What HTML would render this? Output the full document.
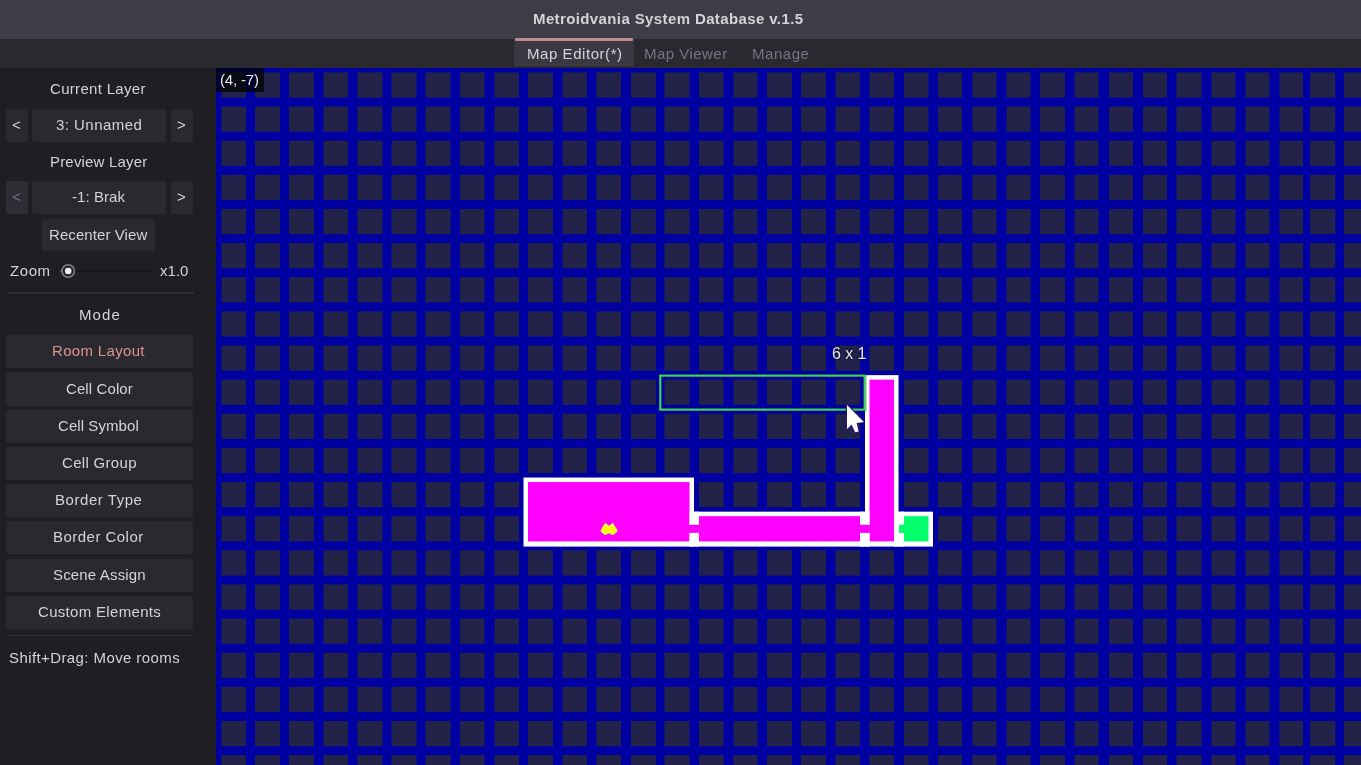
<!DOCTYPE html><html><head><meta charset="utf-8"><style>
html,body{margin:0;padding:0;width:1361px;height:765px;overflow:hidden;background:#1f1e23;font-family:"Liberation Sans", sans-serif;}
.a{position:absolute;}
.t{position:absolute;white-space:nowrap;will-change:transform;}
</style></head><body>
<div class="a" style="left:0.00px;top:0.00px;width:1361.00px;height:38.80px;background:#3e3c47;"></div>
<div class="t" style="left:533.20px;top:10.50px;line-height:15px;font-size:15px;letter-spacing:0.385px;color:#d4d4d8;font-weight:bold;">Metroidvania System Database v.1.5</div>
<div class="a" style="left:0.00px;top:38.80px;width:1361.00px;height:29.20px;background:#2a292f;"></div>
<div class="a" style="left:0.00px;top:38.80px;width:1361.00px;height:2.20px;background:#292733;"></div>
<div class="a" style="left:513.80px;top:38.30px;width:120.00px;height:27.70px;background:#3a3943;"></div>
<div class="a" style="left:514.80px;top:38.30px;width:118.50px;height:2.30px;background:#c28a8a;border-radius:1px;"></div>
<div class="t" style="left:526.95px;top:45.75px;line-height:15px;font-size:15px;letter-spacing:0.558px;color:#d4d4d8;font-weight:normal;">Map Editor(*)</div>
<div class="t" style="left:644.20px;top:45.60px;line-height:15px;font-size:15px;letter-spacing:0.467px;color:#77757f;font-weight:normal;">Map Viewer</div>
<div class="t" style="left:751.60px;top:45.60px;line-height:15px;font-size:15px;letter-spacing:0.54px;color:#77757f;font-weight:normal;">Manage</div>
<div class="t" style="left:49.70px;top:80.90px;line-height:15px;font-size:15px;letter-spacing:0.308px;color:#d4d4d8;font-weight:normal;">Current Layer</div>
<div class="a" style="left:5.50px;top:108.70px;width:22.00px;height:33.30px;background:#2a292f;border-radius:2px;"></div>
<div class="a" style="left:31.70px;top:108.70px;width:134.30px;height:33.30px;background:#2a292f;border-radius:2px;"></div>
<div class="a" style="left:171.00px;top:108.70px;width:22.00px;height:33.30px;background:#2a292f;border-radius:2px;"></div>
<div class="t" style="left:12.00px;top:117.10px;line-height:15px;font-size:15px;letter-spacing:0px;color:#d4d4d8;font-weight:normal;">&lt;</div>
<div class="t" style="left:55.70px;top:117.10px;line-height:15px;font-size:15px;letter-spacing:0.456px;color:#d4d4d8;font-weight:normal;">3: Unnamed</div>
<div class="t" style="left:177.00px;top:117.10px;line-height:15px;font-size:15px;letter-spacing:0px;color:#d4d4d8;font-weight:normal;">&gt;</div>
<div class="t" style="left:49.95px;top:153.50px;line-height:15px;font-size:15px;letter-spacing:0.183px;color:#d4d4d8;font-weight:normal;">Preview Layer</div>
<div class="a" style="left:5.50px;top:181.30px;width:22.00px;height:32.70px;background:#2e2d35;border-radius:2px;"></div>
<div class="a" style="left:31.70px;top:181.30px;width:134.30px;height:32.70px;background:#2a292f;border-radius:2px;"></div>
<div class="a" style="left:171.00px;top:181.30px;width:22.00px;height:32.70px;background:#2a292f;border-radius:2px;"></div>
<div class="t" style="left:12.00px;top:189.35px;line-height:15px;font-size:15px;letter-spacing:0px;color:#77757f;font-weight:normal;">&lt;</div>
<div class="t" style="left:71.90px;top:189.35px;line-height:15px;font-size:15px;letter-spacing:0.071px;color:#d4d4d8;font-weight:normal;">-1: Brak</div>
<div class="t" style="left:177.00px;top:189.35px;line-height:15px;font-size:15px;letter-spacing:0px;color:#d4d4d8;font-weight:normal;">&gt;</div>
<div class="a" style="left:42.40px;top:218.50px;width:113.10px;height:32.60px;background:#2a292f;border-radius:2px;"></div>
<div class="t" style="left:48.60px;top:226.80px;line-height:15px;font-size:15px;letter-spacing:0.083px;color:#d4d4d8;font-weight:normal;">Recenter View</div>
<div class="t" style="left:9.85px;top:263.30px;line-height:15px;font-size:15px;letter-spacing:0.567px;color:#d4d4d8;font-weight:normal;">Zoom</div>
<div class="t" style="left:159.70px;top:263.30px;line-height:15px;font-size:15px;letter-spacing:0.033px;color:#d4d4d8;font-weight:normal;">x1.0</div>
<div class="a" style="left:68px;top:270px;width:82px;height:2px;background:#17161a"></div>
<svg class="a" style="left:58px;top:261px" width="20" height="20"><path d="M2.2,10 L5.5,7.2 L5.5,12.8 Z" fill="#8a8a90"/><circle cx="10.2" cy="10" r="6.2" fill="#1f1e23" stroke="#808086" stroke-width="1.5"/><circle cx="10.2" cy="10" r="3.3" fill="#eeeeee"/></svg>
<div class="a" style="left:7px;top:292px;width:186.5px;height:1.6px;background:#2e2d33"></div>
<div class="t" style="left:78.90px;top:306.60px;line-height:15px;font-size:15px;letter-spacing:1.067px;color:#d4d4d8;font-weight:normal;">Mode</div>
<div class="a" style="left:5.50px;top:335.20px;width:187.10px;height:33.20px;background:#2a292f;border-radius:2px;"></div>
<div class="t" style="left:52.00px;top:343.35px;line-height:15px;font-size:15px;letter-spacing:0.33px;color:#dc9295;font-weight:normal;">Room Layout</div>
<div class="a" style="left:5.50px;top:372.42px;width:187.10px;height:33.20px;background:#2a292f;border-radius:2px;"></div>
<div class="t" style="left:65.90px;top:380.57px;line-height:15px;font-size:15px;letter-spacing:0.1px;color:#d4d4d8;font-weight:normal;">Cell Color</div>
<div class="a" style="left:5.50px;top:409.64px;width:187.10px;height:33.20px;background:#2a292f;border-radius:2px;"></div>
<div class="t" style="left:57.60px;top:417.79px;line-height:15px;font-size:15px;letter-spacing:0.07px;color:#d4d4d8;font-weight:normal;">Cell Symbol</div>
<div class="a" style="left:5.50px;top:446.86px;width:187.10px;height:33.20px;background:#2a292f;border-radius:2px;"></div>
<div class="t" style="left:62.00px;top:455.01px;line-height:15px;font-size:15px;letter-spacing:0.311px;color:#d4d4d8;font-weight:normal;">Cell Group</div>
<div class="a" style="left:5.50px;top:484.08px;width:187.10px;height:33.20px;background:#2a292f;border-radius:2px;"></div>
<div class="t" style="left:54.50px;top:492.23px;line-height:15px;font-size:15px;letter-spacing:0.55px;color:#d4d4d8;font-weight:normal;">Border Type</div>
<div class="a" style="left:5.50px;top:521.30px;width:187.10px;height:33.20px;background:#2a292f;border-radius:2px;"></div>
<div class="t" style="left:52.50px;top:529.45px;line-height:15px;font-size:15px;letter-spacing:0.473px;color:#d4d4d8;font-weight:normal;">Border Color</div>
<div class="a" style="left:5.50px;top:558.52px;width:187.10px;height:33.20px;background:#2a292f;border-radius:2px;"></div>
<div class="t" style="left:52.50px;top:566.67px;line-height:15px;font-size:15px;letter-spacing:0.164px;color:#d4d4d8;font-weight:normal;">Scene Assign</div>
<div class="a" style="left:5.50px;top:595.74px;width:187.10px;height:33.20px;background:#2a292f;border-radius:2px;"></div>
<div class="t" style="left:37.70px;top:603.89px;line-height:15px;font-size:15px;letter-spacing:0.314px;color:#d4d4d8;font-weight:normal;">Custom Elements</div>
<div class="a" style="left:7.00px;top:634.50px;width:186.50px;height:1.60px;background:#2e2d33;"></div>
<div class="t" style="left:8.85px;top:649.50px;line-height:15px;font-size:15px;letter-spacing:0.405px;color:#d4d4d8;font-weight:normal;">Shift+Drag: Move rooms</div>
<svg class="a" style="left:216px;top:68px" width="1145" height="697"><rect width="1145" height="697" fill="#0000a2"/><g fill="#23234a"><rect x="5.50" y="4.40" width="24.50" height="25.20"/><rect x="5.50" y="38.54" width="24.50" height="25.20"/><rect x="5.50" y="72.67" width="24.50" height="25.20"/><rect x="5.50" y="106.81" width="24.50" height="25.20"/><rect x="5.50" y="140.95" width="24.50" height="25.20"/><rect x="5.50" y="175.09" width="24.50" height="25.20"/><rect x="5.50" y="209.22" width="24.50" height="25.20"/><rect x="5.50" y="243.36" width="24.50" height="25.20"/><rect x="5.50" y="277.50" width="24.50" height="25.20"/><rect x="5.50" y="311.63" width="24.50" height="25.20"/><rect x="5.50" y="345.77" width="24.50" height="25.20"/><rect x="5.50" y="379.91" width="24.50" height="25.20"/><rect x="5.50" y="414.04" width="24.50" height="25.20"/><rect x="5.50" y="448.18" width="24.50" height="25.20"/><rect x="5.50" y="482.32" width="24.50" height="25.20"/><rect x="5.50" y="516.46" width="24.50" height="25.20"/><rect x="5.50" y="550.59" width="24.50" height="25.20"/><rect x="5.50" y="584.73" width="24.50" height="25.20"/><rect x="5.50" y="618.87" width="24.50" height="25.20"/><rect x="5.50" y="653.00" width="24.50" height="25.20"/><rect x="5.50" y="687.14" width="24.50" height="25.20"/><rect x="39.00" y="4.40" width="25.00" height="25.20"/><rect x="39.00" y="38.54" width="25.00" height="25.20"/><rect x="39.00" y="72.67" width="25.00" height="25.20"/><rect x="39.00" y="106.81" width="25.00" height="25.20"/><rect x="39.00" y="140.95" width="25.00" height="25.20"/><rect x="39.00" y="175.09" width="25.00" height="25.20"/><rect x="39.00" y="209.22" width="25.00" height="25.20"/><rect x="39.00" y="243.36" width="25.00" height="25.20"/><rect x="39.00" y="277.50" width="25.00" height="25.20"/><rect x="39.00" y="311.63" width="25.00" height="25.20"/><rect x="39.00" y="345.77" width="25.00" height="25.20"/><rect x="39.00" y="379.91" width="25.00" height="25.20"/><rect x="39.00" y="414.04" width="25.00" height="25.20"/><rect x="39.00" y="448.18" width="25.00" height="25.20"/><rect x="39.00" y="482.32" width="25.00" height="25.20"/><rect x="39.00" y="516.46" width="25.00" height="25.20"/><rect x="39.00" y="550.59" width="25.00" height="25.20"/><rect x="39.00" y="584.73" width="25.00" height="25.20"/><rect x="39.00" y="618.87" width="25.00" height="25.20"/><rect x="39.00" y="653.00" width="25.00" height="25.20"/><rect x="39.00" y="687.14" width="25.00" height="25.20"/><rect x="73.00" y="4.40" width="25.00" height="25.20"/><rect x="73.00" y="38.54" width="25.00" height="25.20"/><rect x="73.00" y="72.67" width="25.00" height="25.20"/><rect x="73.00" y="106.81" width="25.00" height="25.20"/><rect x="73.00" y="140.95" width="25.00" height="25.20"/><rect x="73.00" y="175.09" width="25.00" height="25.20"/><rect x="73.00" y="209.22" width="25.00" height="25.20"/><rect x="73.00" y="243.36" width="25.00" height="25.20"/><rect x="73.00" y="277.50" width="25.00" height="25.20"/><rect x="73.00" y="311.63" width="25.00" height="25.20"/><rect x="73.00" y="345.77" width="25.00" height="25.20"/><rect x="73.00" y="379.91" width="25.00" height="25.20"/><rect x="73.00" y="414.04" width="25.00" height="25.20"/><rect x="73.00" y="448.18" width="25.00" height="25.20"/><rect x="73.00" y="482.32" width="25.00" height="25.20"/><rect x="73.00" y="516.46" width="25.00" height="25.20"/><rect x="73.00" y="550.59" width="25.00" height="25.20"/><rect x="73.00" y="584.73" width="25.00" height="25.20"/><rect x="73.00" y="618.87" width="25.00" height="25.20"/><rect x="73.00" y="653.00" width="25.00" height="25.20"/><rect x="73.00" y="687.14" width="25.00" height="25.20"/><rect x="107.50" y="4.40" width="24.50" height="25.20"/><rect x="107.50" y="38.54" width="24.50" height="25.20"/><rect x="107.50" y="72.67" width="24.50" height="25.20"/><rect x="107.50" y="106.81" width="24.50" height="25.20"/><rect x="107.50" y="140.95" width="24.50" height="25.20"/><rect x="107.50" y="175.09" width="24.50" height="25.20"/><rect x="107.50" y="209.22" width="24.50" height="25.20"/><rect x="107.50" y="243.36" width="24.50" height="25.20"/><rect x="107.50" y="277.50" width="24.50" height="25.20"/><rect x="107.50" y="311.63" width="24.50" height="25.20"/><rect x="107.50" y="345.77" width="24.50" height="25.20"/><rect x="107.50" y="379.91" width="24.50" height="25.20"/><rect x="107.50" y="414.04" width="24.50" height="25.20"/><rect x="107.50" y="448.18" width="24.50" height="25.20"/><rect x="107.50" y="482.32" width="24.50" height="25.20"/><rect x="107.50" y="516.46" width="24.50" height="25.20"/><rect x="107.50" y="550.59" width="24.50" height="25.20"/><rect x="107.50" y="584.73" width="24.50" height="25.20"/><rect x="107.50" y="618.87" width="24.50" height="25.20"/><rect x="107.50" y="653.00" width="24.50" height="25.20"/><rect x="107.50" y="687.14" width="24.50" height="25.20"/><rect x="141.50" y="4.40" width="25.00" height="25.20"/><rect x="141.50" y="38.54" width="25.00" height="25.20"/><rect x="141.50" y="72.67" width="25.00" height="25.20"/><rect x="141.50" y="106.81" width="25.00" height="25.20"/><rect x="141.50" y="140.95" width="25.00" height="25.20"/><rect x="141.50" y="175.09" width="25.00" height="25.20"/><rect x="141.50" y="209.22" width="25.00" height="25.20"/><rect x="141.50" y="243.36" width="25.00" height="25.20"/><rect x="141.50" y="277.50" width="25.00" height="25.20"/><rect x="141.50" y="311.63" width="25.00" height="25.20"/><rect x="141.50" y="345.77" width="25.00" height="25.20"/><rect x="141.50" y="379.91" width="25.00" height="25.20"/><rect x="141.50" y="414.04" width="25.00" height="25.20"/><rect x="141.50" y="448.18" width="25.00" height="25.20"/><rect x="141.50" y="482.32" width="25.00" height="25.20"/><rect x="141.50" y="516.46" width="25.00" height="25.20"/><rect x="141.50" y="550.59" width="25.00" height="25.20"/><rect x="141.50" y="584.73" width="25.00" height="25.20"/><rect x="141.50" y="618.87" width="25.00" height="25.20"/><rect x="141.50" y="653.00" width="25.00" height="25.20"/><rect x="141.50" y="687.14" width="25.00" height="25.20"/><rect x="175.50" y="4.40" width="25.00" height="25.20"/><rect x="175.50" y="38.54" width="25.00" height="25.20"/><rect x="175.50" y="72.67" width="25.00" height="25.20"/><rect x="175.50" y="106.81" width="25.00" height="25.20"/><rect x="175.50" y="140.95" width="25.00" height="25.20"/><rect x="175.50" y="175.09" width="25.00" height="25.20"/><rect x="175.50" y="209.22" width="25.00" height="25.20"/><rect x="175.50" y="243.36" width="25.00" height="25.20"/><rect x="175.50" y="277.50" width="25.00" height="25.20"/><rect x="175.50" y="311.63" width="25.00" height="25.20"/><rect x="175.50" y="345.77" width="25.00" height="25.20"/><rect x="175.50" y="379.91" width="25.00" height="25.20"/><rect x="175.50" y="414.04" width="25.00" height="25.20"/><rect x="175.50" y="448.18" width="25.00" height="25.20"/><rect x="175.50" y="482.32" width="25.00" height="25.20"/><rect x="175.50" y="516.46" width="25.00" height="25.20"/><rect x="175.50" y="550.59" width="25.00" height="25.20"/><rect x="175.50" y="584.73" width="25.00" height="25.20"/><rect x="175.50" y="618.87" width="25.00" height="25.20"/><rect x="175.50" y="653.00" width="25.00" height="25.20"/><rect x="175.50" y="687.14" width="25.00" height="25.20"/><rect x="209.50" y="4.40" width="25.00" height="25.20"/><rect x="209.50" y="38.54" width="25.00" height="25.20"/><rect x="209.50" y="72.67" width="25.00" height="25.20"/><rect x="209.50" y="106.81" width="25.00" height="25.20"/><rect x="209.50" y="140.95" width="25.00" height="25.20"/><rect x="209.50" y="175.09" width="25.00" height="25.20"/><rect x="209.50" y="209.22" width="25.00" height="25.20"/><rect x="209.50" y="243.36" width="25.00" height="25.20"/><rect x="209.50" y="277.50" width="25.00" height="25.20"/><rect x="209.50" y="311.63" width="25.00" height="25.20"/><rect x="209.50" y="345.77" width="25.00" height="25.20"/><rect x="209.50" y="379.91" width="25.00" height="25.20"/><rect x="209.50" y="414.04" width="25.00" height="25.20"/><rect x="209.50" y="448.18" width="25.00" height="25.20"/><rect x="209.50" y="482.32" width="25.00" height="25.20"/><rect x="209.50" y="516.46" width="25.00" height="25.20"/><rect x="209.50" y="550.59" width="25.00" height="25.20"/><rect x="209.50" y="584.73" width="25.00" height="25.20"/><rect x="209.50" y="618.87" width="25.00" height="25.20"/><rect x="209.50" y="653.00" width="25.00" height="25.20"/><rect x="209.50" y="687.14" width="25.00" height="25.20"/><rect x="244.00" y="4.40" width="24.50" height="25.20"/><rect x="244.00" y="38.54" width="24.50" height="25.20"/><rect x="244.00" y="72.67" width="24.50" height="25.20"/><rect x="244.00" y="106.81" width="24.50" height="25.20"/><rect x="244.00" y="140.95" width="24.50" height="25.20"/><rect x="244.00" y="175.09" width="24.50" height="25.20"/><rect x="244.00" y="209.22" width="24.50" height="25.20"/><rect x="244.00" y="243.36" width="24.50" height="25.20"/><rect x="244.00" y="277.50" width="24.50" height="25.20"/><rect x="244.00" y="311.63" width="24.50" height="25.20"/><rect x="244.00" y="345.77" width="24.50" height="25.20"/><rect x="244.00" y="379.91" width="24.50" height="25.20"/><rect x="244.00" y="414.04" width="24.50" height="25.20"/><rect x="244.00" y="448.18" width="24.50" height="25.20"/><rect x="244.00" y="482.32" width="24.50" height="25.20"/><rect x="244.00" y="516.46" width="24.50" height="25.20"/><rect x="244.00" y="550.59" width="24.50" height="25.20"/><rect x="244.00" y="584.73" width="24.50" height="25.20"/><rect x="244.00" y="618.87" width="24.50" height="25.20"/><rect x="244.00" y="653.00" width="24.50" height="25.20"/><rect x="244.00" y="687.14" width="24.50" height="25.20"/><rect x="278.50" y="4.40" width="24.50" height="25.20"/><rect x="278.50" y="38.54" width="24.50" height="25.20"/><rect x="278.50" y="72.67" width="24.50" height="25.20"/><rect x="278.50" y="106.81" width="24.50" height="25.20"/><rect x="278.50" y="140.95" width="24.50" height="25.20"/><rect x="278.50" y="175.09" width="24.50" height="25.20"/><rect x="278.50" y="209.22" width="24.50" height="25.20"/><rect x="278.50" y="243.36" width="24.50" height="25.20"/><rect x="278.50" y="277.50" width="24.50" height="25.20"/><rect x="278.50" y="311.63" width="24.50" height="25.20"/><rect x="278.50" y="345.77" width="24.50" height="25.20"/><rect x="278.50" y="379.91" width="24.50" height="25.20"/><rect x="278.50" y="414.04" width="24.50" height="25.20"/><rect x="278.50" y="448.18" width="24.50" height="25.20"/><rect x="278.50" y="482.32" width="24.50" height="25.20"/><rect x="278.50" y="516.46" width="24.50" height="25.20"/><rect x="278.50" y="550.59" width="24.50" height="25.20"/><rect x="278.50" y="584.73" width="24.50" height="25.20"/><rect x="278.50" y="618.87" width="24.50" height="25.20"/><rect x="278.50" y="653.00" width="24.50" height="25.20"/><rect x="278.50" y="687.14" width="24.50" height="25.20"/><rect x="312.00" y="4.40" width="25.00" height="25.20"/><rect x="312.00" y="38.54" width="25.00" height="25.20"/><rect x="312.00" y="72.67" width="25.00" height="25.20"/><rect x="312.00" y="106.81" width="25.00" height="25.20"/><rect x="312.00" y="140.95" width="25.00" height="25.20"/><rect x="312.00" y="175.09" width="25.00" height="25.20"/><rect x="312.00" y="209.22" width="25.00" height="25.20"/><rect x="312.00" y="243.36" width="25.00" height="25.20"/><rect x="312.00" y="277.50" width="25.00" height="25.20"/><rect x="312.00" y="311.63" width="25.00" height="25.20"/><rect x="312.00" y="345.77" width="25.00" height="25.20"/><rect x="312.00" y="379.91" width="25.00" height="25.20"/><rect x="312.00" y="414.04" width="25.00" height="25.20"/><rect x="312.00" y="448.18" width="25.00" height="25.20"/><rect x="312.00" y="482.32" width="25.00" height="25.20"/><rect x="312.00" y="516.46" width="25.00" height="25.20"/><rect x="312.00" y="550.59" width="25.00" height="25.20"/><rect x="312.00" y="584.73" width="25.00" height="25.20"/><rect x="312.00" y="618.87" width="25.00" height="25.20"/><rect x="312.00" y="653.00" width="25.00" height="25.20"/><rect x="312.00" y="687.14" width="25.00" height="25.20"/><rect x="346.50" y="4.40" width="24.50" height="25.20"/><rect x="346.50" y="38.54" width="24.50" height="25.20"/><rect x="346.50" y="72.67" width="24.50" height="25.20"/><rect x="346.50" y="106.81" width="24.50" height="25.20"/><rect x="346.50" y="140.95" width="24.50" height="25.20"/><rect x="346.50" y="175.09" width="24.50" height="25.20"/><rect x="346.50" y="209.22" width="24.50" height="25.20"/><rect x="346.50" y="243.36" width="24.50" height="25.20"/><rect x="346.50" y="277.50" width="24.50" height="25.20"/><rect x="346.50" y="311.63" width="24.50" height="25.20"/><rect x="346.50" y="345.77" width="24.50" height="25.20"/><rect x="346.50" y="379.91" width="24.50" height="25.20"/><rect x="346.50" y="414.04" width="24.50" height="25.20"/><rect x="346.50" y="448.18" width="24.50" height="25.20"/><rect x="346.50" y="482.32" width="24.50" height="25.20"/><rect x="346.50" y="516.46" width="24.50" height="25.20"/><rect x="346.50" y="550.59" width="24.50" height="25.20"/><rect x="346.50" y="584.73" width="24.50" height="25.20"/><rect x="346.50" y="618.87" width="24.50" height="25.20"/><rect x="346.50" y="653.00" width="24.50" height="25.20"/><rect x="346.50" y="687.14" width="24.50" height="25.20"/><rect x="380.50" y="4.40" width="24.50" height="25.20"/><rect x="380.50" y="38.54" width="24.50" height="25.20"/><rect x="380.50" y="72.67" width="24.50" height="25.20"/><rect x="380.50" y="106.81" width="24.50" height="25.20"/><rect x="380.50" y="140.95" width="24.50" height="25.20"/><rect x="380.50" y="175.09" width="24.50" height="25.20"/><rect x="380.50" y="209.22" width="24.50" height="25.20"/><rect x="380.50" y="243.36" width="24.50" height="25.20"/><rect x="380.50" y="277.50" width="24.50" height="25.20"/><rect x="380.50" y="311.63" width="24.50" height="25.20"/><rect x="380.50" y="345.77" width="24.50" height="25.20"/><rect x="380.50" y="379.91" width="24.50" height="25.20"/><rect x="380.50" y="414.04" width="24.50" height="25.20"/><rect x="380.50" y="448.18" width="24.50" height="25.20"/><rect x="380.50" y="482.32" width="24.50" height="25.20"/><rect x="380.50" y="516.46" width="24.50" height="25.20"/><rect x="380.50" y="550.59" width="24.50" height="25.20"/><rect x="380.50" y="584.73" width="24.50" height="25.20"/><rect x="380.50" y="618.87" width="24.50" height="25.20"/><rect x="380.50" y="653.00" width="24.50" height="25.20"/><rect x="380.50" y="687.14" width="24.50" height="25.20"/><rect x="415.00" y="4.40" width="24.80" height="25.20"/><rect x="415.00" y="38.54" width="24.80" height="25.20"/><rect x="415.00" y="72.67" width="24.80" height="25.20"/><rect x="415.00" y="106.81" width="24.80" height="25.20"/><rect x="415.00" y="140.95" width="24.80" height="25.20"/><rect x="415.00" y="175.09" width="24.80" height="25.20"/><rect x="415.00" y="209.22" width="24.80" height="25.20"/><rect x="415.00" y="243.36" width="24.80" height="25.20"/><rect x="415.00" y="277.50" width="24.80" height="25.20"/><rect x="415.00" y="311.63" width="24.80" height="25.20"/><rect x="415.00" y="345.77" width="24.80" height="25.20"/><rect x="415.00" y="379.91" width="24.80" height="25.20"/><rect x="415.00" y="414.04" width="24.80" height="25.20"/><rect x="415.00" y="448.18" width="24.80" height="25.20"/><rect x="415.00" y="482.32" width="24.80" height="25.20"/><rect x="415.00" y="516.46" width="24.80" height="25.20"/><rect x="415.00" y="550.59" width="24.80" height="25.20"/><rect x="415.00" y="584.73" width="24.80" height="25.20"/><rect x="415.00" y="618.87" width="24.80" height="25.20"/><rect x="415.00" y="653.00" width="24.80" height="25.20"/><rect x="415.00" y="687.14" width="24.80" height="25.20"/><rect x="448.50" y="4.40" width="25.00" height="25.20"/><rect x="448.50" y="38.54" width="25.00" height="25.20"/><rect x="448.50" y="72.67" width="25.00" height="25.20"/><rect x="448.50" y="106.81" width="25.00" height="25.20"/><rect x="448.50" y="140.95" width="25.00" height="25.20"/><rect x="448.50" y="175.09" width="25.00" height="25.20"/><rect x="448.50" y="209.22" width="25.00" height="25.20"/><rect x="448.50" y="243.36" width="25.00" height="25.20"/><rect x="448.50" y="277.50" width="25.00" height="25.20"/><rect x="448.50" y="311.63" width="25.00" height="25.20"/><rect x="448.50" y="345.77" width="25.00" height="25.20"/><rect x="448.50" y="379.91" width="25.00" height="25.20"/><rect x="448.50" y="414.04" width="25.00" height="25.20"/><rect x="448.50" y="448.18" width="25.00" height="25.20"/><rect x="448.50" y="482.32" width="25.00" height="25.20"/><rect x="448.50" y="516.46" width="25.00" height="25.20"/><rect x="448.50" y="550.59" width="25.00" height="25.20"/><rect x="448.50" y="584.73" width="25.00" height="25.20"/><rect x="448.50" y="618.87" width="25.00" height="25.20"/><rect x="448.50" y="653.00" width="25.00" height="25.20"/><rect x="448.50" y="687.14" width="25.00" height="25.20"/><rect x="483.00" y="4.40" width="24.50" height="25.20"/><rect x="483.00" y="38.54" width="24.50" height="25.20"/><rect x="483.00" y="72.67" width="24.50" height="25.20"/><rect x="483.00" y="106.81" width="24.50" height="25.20"/><rect x="483.00" y="140.95" width="24.50" height="25.20"/><rect x="483.00" y="175.09" width="24.50" height="25.20"/><rect x="483.00" y="209.22" width="24.50" height="25.20"/><rect x="483.00" y="243.36" width="24.50" height="25.20"/><rect x="483.00" y="277.50" width="24.50" height="25.20"/><rect x="483.00" y="311.63" width="24.50" height="25.20"/><rect x="483.00" y="345.77" width="24.50" height="25.20"/><rect x="483.00" y="379.91" width="24.50" height="25.20"/><rect x="483.00" y="414.04" width="24.50" height="25.20"/><rect x="483.00" y="448.18" width="24.50" height="25.20"/><rect x="483.00" y="482.32" width="24.50" height="25.20"/><rect x="483.00" y="516.46" width="24.50" height="25.20"/><rect x="483.00" y="550.59" width="24.50" height="25.20"/><rect x="483.00" y="584.73" width="24.50" height="25.20"/><rect x="483.00" y="618.87" width="24.50" height="25.20"/><rect x="483.00" y="653.00" width="24.50" height="25.20"/><rect x="483.00" y="687.14" width="24.50" height="25.20"/><rect x="517.50" y="4.40" width="24.00" height="25.20"/><rect x="517.50" y="38.54" width="24.00" height="25.20"/><rect x="517.50" y="72.67" width="24.00" height="25.20"/><rect x="517.50" y="106.81" width="24.00" height="25.20"/><rect x="517.50" y="140.95" width="24.00" height="25.20"/><rect x="517.50" y="175.09" width="24.00" height="25.20"/><rect x="517.50" y="209.22" width="24.00" height="25.20"/><rect x="517.50" y="243.36" width="24.00" height="25.20"/><rect x="517.50" y="277.50" width="24.00" height="25.20"/><rect x="517.50" y="311.63" width="24.00" height="25.20"/><rect x="517.50" y="345.77" width="24.00" height="25.20"/><rect x="517.50" y="379.91" width="24.00" height="25.20"/><rect x="517.50" y="414.04" width="24.00" height="25.20"/><rect x="517.50" y="448.18" width="24.00" height="25.20"/><rect x="517.50" y="482.32" width="24.00" height="25.20"/><rect x="517.50" y="516.46" width="24.00" height="25.20"/><rect x="517.50" y="550.59" width="24.00" height="25.20"/><rect x="517.50" y="584.73" width="24.00" height="25.20"/><rect x="517.50" y="618.87" width="24.00" height="25.20"/><rect x="517.50" y="653.00" width="24.00" height="25.20"/><rect x="517.50" y="687.14" width="24.00" height="25.20"/><rect x="551.00" y="4.40" width="25.00" height="25.20"/><rect x="551.00" y="38.54" width="25.00" height="25.20"/><rect x="551.00" y="72.67" width="25.00" height="25.20"/><rect x="551.00" y="106.81" width="25.00" height="25.20"/><rect x="551.00" y="140.95" width="25.00" height="25.20"/><rect x="551.00" y="175.09" width="25.00" height="25.20"/><rect x="551.00" y="209.22" width="25.00" height="25.20"/><rect x="551.00" y="243.36" width="25.00" height="25.20"/><rect x="551.00" y="277.50" width="25.00" height="25.20"/><rect x="551.00" y="311.63" width="25.00" height="25.20"/><rect x="551.00" y="345.77" width="25.00" height="25.20"/><rect x="551.00" y="379.91" width="25.00" height="25.20"/><rect x="551.00" y="414.04" width="25.00" height="25.20"/><rect x="551.00" y="448.18" width="25.00" height="25.20"/><rect x="551.00" y="482.32" width="25.00" height="25.20"/><rect x="551.00" y="516.46" width="25.00" height="25.20"/><rect x="551.00" y="550.59" width="25.00" height="25.20"/><rect x="551.00" y="584.73" width="25.00" height="25.20"/><rect x="551.00" y="618.87" width="25.00" height="25.20"/><rect x="551.00" y="653.00" width="25.00" height="25.20"/><rect x="551.00" y="687.14" width="25.00" height="25.20"/><rect x="585.00" y="4.40" width="25.00" height="25.20"/><rect x="585.00" y="38.54" width="25.00" height="25.20"/><rect x="585.00" y="72.67" width="25.00" height="25.20"/><rect x="585.00" y="106.81" width="25.00" height="25.20"/><rect x="585.00" y="140.95" width="25.00" height="25.20"/><rect x="585.00" y="175.09" width="25.00" height="25.20"/><rect x="585.00" y="209.22" width="25.00" height="25.20"/><rect x="585.00" y="243.36" width="25.00" height="25.20"/><rect x="585.00" y="277.50" width="25.00" height="25.20"/><rect x="585.00" y="311.63" width="25.00" height="25.20"/><rect x="585.00" y="345.77" width="25.00" height="25.20"/><rect x="585.00" y="379.91" width="25.00" height="25.20"/><rect x="585.00" y="414.04" width="25.00" height="25.20"/><rect x="585.00" y="448.18" width="25.00" height="25.20"/><rect x="585.00" y="482.32" width="25.00" height="25.20"/><rect x="585.00" y="516.46" width="25.00" height="25.20"/><rect x="585.00" y="550.59" width="25.00" height="25.20"/><rect x="585.00" y="584.73" width="25.00" height="25.20"/><rect x="585.00" y="618.87" width="25.00" height="25.20"/><rect x="585.00" y="653.00" width="25.00" height="25.20"/><rect x="585.00" y="687.14" width="25.00" height="25.20"/><rect x="619.50" y="4.40" width="24.50" height="25.20"/><rect x="619.50" y="38.54" width="24.50" height="25.20"/><rect x="619.50" y="72.67" width="24.50" height="25.20"/><rect x="619.50" y="106.81" width="24.50" height="25.20"/><rect x="619.50" y="140.95" width="24.50" height="25.20"/><rect x="619.50" y="175.09" width="24.50" height="25.20"/><rect x="619.50" y="209.22" width="24.50" height="25.20"/><rect x="619.50" y="243.36" width="24.50" height="25.20"/><rect x="619.50" y="277.50" width="24.50" height="25.20"/><rect x="619.50" y="311.63" width="24.50" height="25.20"/><rect x="619.50" y="345.77" width="24.50" height="25.20"/><rect x="619.50" y="379.91" width="24.50" height="25.20"/><rect x="619.50" y="414.04" width="24.50" height="25.20"/><rect x="619.50" y="448.18" width="24.50" height="25.20"/><rect x="619.50" y="482.32" width="24.50" height="25.20"/><rect x="619.50" y="516.46" width="24.50" height="25.20"/><rect x="619.50" y="550.59" width="24.50" height="25.20"/><rect x="619.50" y="584.73" width="24.50" height="25.20"/><rect x="619.50" y="618.87" width="24.50" height="25.20"/><rect x="619.50" y="653.00" width="24.50" height="25.20"/><rect x="619.50" y="687.14" width="24.50" height="25.20"/><rect x="653.50" y="4.40" width="24.50" height="25.20"/><rect x="653.50" y="38.54" width="24.50" height="25.20"/><rect x="653.50" y="72.67" width="24.50" height="25.20"/><rect x="653.50" y="106.81" width="24.50" height="25.20"/><rect x="653.50" y="140.95" width="24.50" height="25.20"/><rect x="653.50" y="175.09" width="24.50" height="25.20"/><rect x="653.50" y="209.22" width="24.50" height="25.20"/><rect x="653.50" y="243.36" width="24.50" height="25.20"/><rect x="653.50" y="277.50" width="24.50" height="25.20"/><rect x="653.50" y="311.63" width="24.50" height="25.20"/><rect x="653.50" y="345.77" width="24.50" height="25.20"/><rect x="653.50" y="379.91" width="24.50" height="25.20"/><rect x="653.50" y="414.04" width="24.50" height="25.20"/><rect x="653.50" y="448.18" width="24.50" height="25.20"/><rect x="653.50" y="482.32" width="24.50" height="25.20"/><rect x="653.50" y="516.46" width="24.50" height="25.20"/><rect x="653.50" y="550.59" width="24.50" height="25.20"/><rect x="653.50" y="584.73" width="24.50" height="25.20"/><rect x="653.50" y="618.87" width="24.50" height="25.20"/><rect x="653.50" y="653.00" width="24.50" height="25.20"/><rect x="653.50" y="687.14" width="24.50" height="25.20"/><rect x="688.00" y="4.40" width="24.50" height="25.20"/><rect x="688.00" y="38.54" width="24.50" height="25.20"/><rect x="688.00" y="72.67" width="24.50" height="25.20"/><rect x="688.00" y="106.81" width="24.50" height="25.20"/><rect x="688.00" y="140.95" width="24.50" height="25.20"/><rect x="688.00" y="175.09" width="24.50" height="25.20"/><rect x="688.00" y="209.22" width="24.50" height="25.20"/><rect x="688.00" y="243.36" width="24.50" height="25.20"/><rect x="688.00" y="277.50" width="24.50" height="25.20"/><rect x="688.00" y="311.63" width="24.50" height="25.20"/><rect x="688.00" y="345.77" width="24.50" height="25.20"/><rect x="688.00" y="379.91" width="24.50" height="25.20"/><rect x="688.00" y="414.04" width="24.50" height="25.20"/><rect x="688.00" y="448.18" width="24.50" height="25.20"/><rect x="688.00" y="482.32" width="24.50" height="25.20"/><rect x="688.00" y="516.46" width="24.50" height="25.20"/><rect x="688.00" y="550.59" width="24.50" height="25.20"/><rect x="688.00" y="584.73" width="24.50" height="25.20"/><rect x="688.00" y="618.87" width="24.50" height="25.20"/><rect x="688.00" y="653.00" width="24.50" height="25.20"/><rect x="688.00" y="687.14" width="24.50" height="25.20"/><rect x="722.00" y="4.40" width="24.00" height="25.20"/><rect x="722.00" y="38.54" width="24.00" height="25.20"/><rect x="722.00" y="72.67" width="24.00" height="25.20"/><rect x="722.00" y="106.81" width="24.00" height="25.20"/><rect x="722.00" y="140.95" width="24.00" height="25.20"/><rect x="722.00" y="175.09" width="24.00" height="25.20"/><rect x="722.00" y="209.22" width="24.00" height="25.20"/><rect x="722.00" y="243.36" width="24.00" height="25.20"/><rect x="722.00" y="277.50" width="24.00" height="25.20"/><rect x="722.00" y="311.63" width="24.00" height="25.20"/><rect x="722.00" y="345.77" width="24.00" height="25.20"/><rect x="722.00" y="379.91" width="24.00" height="25.20"/><rect x="722.00" y="414.04" width="24.00" height="25.20"/><rect x="722.00" y="448.18" width="24.00" height="25.20"/><rect x="722.00" y="482.32" width="24.00" height="25.20"/><rect x="722.00" y="516.46" width="24.00" height="25.20"/><rect x="722.00" y="550.59" width="24.00" height="25.20"/><rect x="722.00" y="584.73" width="24.00" height="25.20"/><rect x="722.00" y="618.87" width="24.00" height="25.20"/><rect x="722.00" y="653.00" width="24.00" height="25.20"/><rect x="722.00" y="687.14" width="24.00" height="25.20"/><rect x="756.50" y="4.40" width="24.00" height="25.20"/><rect x="756.50" y="38.54" width="24.00" height="25.20"/><rect x="756.50" y="72.67" width="24.00" height="25.20"/><rect x="756.50" y="106.81" width="24.00" height="25.20"/><rect x="756.50" y="140.95" width="24.00" height="25.20"/><rect x="756.50" y="175.09" width="24.00" height="25.20"/><rect x="756.50" y="209.22" width="24.00" height="25.20"/><rect x="756.50" y="243.36" width="24.00" height="25.20"/><rect x="756.50" y="277.50" width="24.00" height="25.20"/><rect x="756.50" y="311.63" width="24.00" height="25.20"/><rect x="756.50" y="345.77" width="24.00" height="25.20"/><rect x="756.50" y="379.91" width="24.00" height="25.20"/><rect x="756.50" y="414.04" width="24.00" height="25.20"/><rect x="756.50" y="448.18" width="24.00" height="25.20"/><rect x="756.50" y="482.32" width="24.00" height="25.20"/><rect x="756.50" y="516.46" width="24.00" height="25.20"/><rect x="756.50" y="550.59" width="24.00" height="25.20"/><rect x="756.50" y="584.73" width="24.00" height="25.20"/><rect x="756.50" y="618.87" width="24.00" height="25.20"/><rect x="756.50" y="653.00" width="24.00" height="25.20"/><rect x="756.50" y="687.14" width="24.00" height="25.20"/><rect x="790.50" y="4.40" width="24.00" height="25.20"/><rect x="790.50" y="38.54" width="24.00" height="25.20"/><rect x="790.50" y="72.67" width="24.00" height="25.20"/><rect x="790.50" y="106.81" width="24.00" height="25.20"/><rect x="790.50" y="140.95" width="24.00" height="25.20"/><rect x="790.50" y="175.09" width="24.00" height="25.20"/><rect x="790.50" y="209.22" width="24.00" height="25.20"/><rect x="790.50" y="243.36" width="24.00" height="25.20"/><rect x="790.50" y="277.50" width="24.00" height="25.20"/><rect x="790.50" y="311.63" width="24.00" height="25.20"/><rect x="790.50" y="345.77" width="24.00" height="25.20"/><rect x="790.50" y="379.91" width="24.00" height="25.20"/><rect x="790.50" y="414.04" width="24.00" height="25.20"/><rect x="790.50" y="448.18" width="24.00" height="25.20"/><rect x="790.50" y="482.32" width="24.00" height="25.20"/><rect x="790.50" y="516.46" width="24.00" height="25.20"/><rect x="790.50" y="550.59" width="24.00" height="25.20"/><rect x="790.50" y="584.73" width="24.00" height="25.20"/><rect x="790.50" y="618.87" width="24.00" height="25.20"/><rect x="790.50" y="653.00" width="24.00" height="25.20"/><rect x="790.50" y="687.14" width="24.00" height="25.20"/><rect x="824.00" y="4.40" width="25.00" height="25.20"/><rect x="824.00" y="38.54" width="25.00" height="25.20"/><rect x="824.00" y="72.67" width="25.00" height="25.20"/><rect x="824.00" y="106.81" width="25.00" height="25.20"/><rect x="824.00" y="140.95" width="25.00" height="25.20"/><rect x="824.00" y="175.09" width="25.00" height="25.20"/><rect x="824.00" y="209.22" width="25.00" height="25.20"/><rect x="824.00" y="243.36" width="25.00" height="25.20"/><rect x="824.00" y="277.50" width="25.00" height="25.20"/><rect x="824.00" y="311.63" width="25.00" height="25.20"/><rect x="824.00" y="345.77" width="25.00" height="25.20"/><rect x="824.00" y="379.91" width="25.00" height="25.20"/><rect x="824.00" y="414.04" width="25.00" height="25.20"/><rect x="824.00" y="448.18" width="25.00" height="25.20"/><rect x="824.00" y="482.32" width="25.00" height="25.20"/><rect x="824.00" y="516.46" width="25.00" height="25.20"/><rect x="824.00" y="550.59" width="25.00" height="25.20"/><rect x="824.00" y="584.73" width="25.00" height="25.20"/><rect x="824.00" y="618.87" width="25.00" height="25.20"/><rect x="824.00" y="653.00" width="25.00" height="25.20"/><rect x="824.00" y="687.14" width="25.00" height="25.20"/><rect x="858.50" y="4.40" width="24.00" height="25.20"/><rect x="858.50" y="38.54" width="24.00" height="25.20"/><rect x="858.50" y="72.67" width="24.00" height="25.20"/><rect x="858.50" y="106.81" width="24.00" height="25.20"/><rect x="858.50" y="140.95" width="24.00" height="25.20"/><rect x="858.50" y="175.09" width="24.00" height="25.20"/><rect x="858.50" y="209.22" width="24.00" height="25.20"/><rect x="858.50" y="243.36" width="24.00" height="25.20"/><rect x="858.50" y="277.50" width="24.00" height="25.20"/><rect x="858.50" y="311.63" width="24.00" height="25.20"/><rect x="858.50" y="345.77" width="24.00" height="25.20"/><rect x="858.50" y="379.91" width="24.00" height="25.20"/><rect x="858.50" y="414.04" width="24.00" height="25.20"/><rect x="858.50" y="448.18" width="24.00" height="25.20"/><rect x="858.50" y="482.32" width="24.00" height="25.20"/><rect x="858.50" y="516.46" width="24.00" height="25.20"/><rect x="858.50" y="550.59" width="24.00" height="25.20"/><rect x="858.50" y="584.73" width="24.00" height="25.20"/><rect x="858.50" y="618.87" width="24.00" height="25.20"/><rect x="858.50" y="653.00" width="24.00" height="25.20"/><rect x="858.50" y="687.14" width="24.00" height="25.20"/><rect x="893.00" y="4.40" width="24.00" height="25.20"/><rect x="893.00" y="38.54" width="24.00" height="25.20"/><rect x="893.00" y="72.67" width="24.00" height="25.20"/><rect x="893.00" y="106.81" width="24.00" height="25.20"/><rect x="893.00" y="140.95" width="24.00" height="25.20"/><rect x="893.00" y="175.09" width="24.00" height="25.20"/><rect x="893.00" y="209.22" width="24.00" height="25.20"/><rect x="893.00" y="243.36" width="24.00" height="25.20"/><rect x="893.00" y="277.50" width="24.00" height="25.20"/><rect x="893.00" y="311.63" width="24.00" height="25.20"/><rect x="893.00" y="345.77" width="24.00" height="25.20"/><rect x="893.00" y="379.91" width="24.00" height="25.20"/><rect x="893.00" y="414.04" width="24.00" height="25.20"/><rect x="893.00" y="448.18" width="24.00" height="25.20"/><rect x="893.00" y="482.32" width="24.00" height="25.20"/><rect x="893.00" y="516.46" width="24.00" height="25.20"/><rect x="893.00" y="550.59" width="24.00" height="25.20"/><rect x="893.00" y="584.73" width="24.00" height="25.20"/><rect x="893.00" y="618.87" width="24.00" height="25.20"/><rect x="893.00" y="653.00" width="24.00" height="25.20"/><rect x="893.00" y="687.14" width="24.00" height="25.20"/><rect x="927.00" y="4.40" width="24.00" height="25.20"/><rect x="927.00" y="38.54" width="24.00" height="25.20"/><rect x="927.00" y="72.67" width="24.00" height="25.20"/><rect x="927.00" y="106.81" width="24.00" height="25.20"/><rect x="927.00" y="140.95" width="24.00" height="25.20"/><rect x="927.00" y="175.09" width="24.00" height="25.20"/><rect x="927.00" y="209.22" width="24.00" height="25.20"/><rect x="927.00" y="243.36" width="24.00" height="25.20"/><rect x="927.00" y="277.50" width="24.00" height="25.20"/><rect x="927.00" y="311.63" width="24.00" height="25.20"/><rect x="927.00" y="345.77" width="24.00" height="25.20"/><rect x="927.00" y="379.91" width="24.00" height="25.20"/><rect x="927.00" y="414.04" width="24.00" height="25.20"/><rect x="927.00" y="448.18" width="24.00" height="25.20"/><rect x="927.00" y="482.32" width="24.00" height="25.20"/><rect x="927.00" y="516.46" width="24.00" height="25.20"/><rect x="927.00" y="550.59" width="24.00" height="25.20"/><rect x="927.00" y="584.73" width="24.00" height="25.20"/><rect x="927.00" y="618.87" width="24.00" height="25.20"/><rect x="927.00" y="653.00" width="24.00" height="25.20"/><rect x="927.00" y="687.14" width="24.00" height="25.20"/><rect x="960.50" y="4.40" width="25.00" height="25.20"/><rect x="960.50" y="38.54" width="25.00" height="25.20"/><rect x="960.50" y="72.67" width="25.00" height="25.20"/><rect x="960.50" y="106.81" width="25.00" height="25.20"/><rect x="960.50" y="140.95" width="25.00" height="25.20"/><rect x="960.50" y="175.09" width="25.00" height="25.20"/><rect x="960.50" y="209.22" width="25.00" height="25.20"/><rect x="960.50" y="243.36" width="25.00" height="25.20"/><rect x="960.50" y="277.50" width="25.00" height="25.20"/><rect x="960.50" y="311.63" width="25.00" height="25.20"/><rect x="960.50" y="345.77" width="25.00" height="25.20"/><rect x="960.50" y="379.91" width="25.00" height="25.20"/><rect x="960.50" y="414.04" width="25.00" height="25.20"/><rect x="960.50" y="448.18" width="25.00" height="25.20"/><rect x="960.50" y="482.32" width="25.00" height="25.20"/><rect x="960.50" y="516.46" width="25.00" height="25.20"/><rect x="960.50" y="550.59" width="25.00" height="25.20"/><rect x="960.50" y="584.73" width="25.00" height="25.20"/><rect x="960.50" y="618.87" width="25.00" height="25.20"/><rect x="960.50" y="653.00" width="25.00" height="25.20"/><rect x="960.50" y="687.14" width="25.00" height="25.20"/><rect x="995.50" y="4.40" width="24.00" height="25.20"/><rect x="995.50" y="38.54" width="24.00" height="25.20"/><rect x="995.50" y="72.67" width="24.00" height="25.20"/><rect x="995.50" y="106.81" width="24.00" height="25.20"/><rect x="995.50" y="140.95" width="24.00" height="25.20"/><rect x="995.50" y="175.09" width="24.00" height="25.20"/><rect x="995.50" y="209.22" width="24.00" height="25.20"/><rect x="995.50" y="243.36" width="24.00" height="25.20"/><rect x="995.50" y="277.50" width="24.00" height="25.20"/><rect x="995.50" y="311.63" width="24.00" height="25.20"/><rect x="995.50" y="345.77" width="24.00" height="25.20"/><rect x="995.50" y="379.91" width="24.00" height="25.20"/><rect x="995.50" y="414.04" width="24.00" height="25.20"/><rect x="995.50" y="448.18" width="24.00" height="25.20"/><rect x="995.50" y="482.32" width="24.00" height="25.20"/><rect x="995.50" y="516.46" width="24.00" height="25.20"/><rect x="995.50" y="550.59" width="24.00" height="25.20"/><rect x="995.50" y="584.73" width="24.00" height="25.20"/><rect x="995.50" y="618.87" width="24.00" height="25.20"/><rect x="995.50" y="653.00" width="24.00" height="25.20"/><rect x="995.50" y="687.14" width="24.00" height="25.20"/><rect x="1029.50" y="4.40" width="24.00" height="25.20"/><rect x="1029.50" y="38.54" width="24.00" height="25.20"/><rect x="1029.50" y="72.67" width="24.00" height="25.20"/><rect x="1029.50" y="106.81" width="24.00" height="25.20"/><rect x="1029.50" y="140.95" width="24.00" height="25.20"/><rect x="1029.50" y="175.09" width="24.00" height="25.20"/><rect x="1029.50" y="209.22" width="24.00" height="25.20"/><rect x="1029.50" y="243.36" width="24.00" height="25.20"/><rect x="1029.50" y="277.50" width="24.00" height="25.20"/><rect x="1029.50" y="311.63" width="24.00" height="25.20"/><rect x="1029.50" y="345.77" width="24.00" height="25.20"/><rect x="1029.50" y="379.91" width="24.00" height="25.20"/><rect x="1029.50" y="414.04" width="24.00" height="25.20"/><rect x="1029.50" y="448.18" width="24.00" height="25.20"/><rect x="1029.50" y="482.32" width="24.00" height="25.20"/><rect x="1029.50" y="516.46" width="24.00" height="25.20"/><rect x="1029.50" y="550.59" width="24.00" height="25.20"/><rect x="1029.50" y="584.73" width="24.00" height="25.20"/><rect x="1029.50" y="618.87" width="24.00" height="25.20"/><rect x="1029.50" y="653.00" width="24.00" height="25.20"/><rect x="1029.50" y="687.14" width="24.00" height="25.20"/><rect x="1063.50" y="4.40" width="23.50" height="25.20"/><rect x="1063.50" y="38.54" width="23.50" height="25.20"/><rect x="1063.50" y="72.67" width="23.50" height="25.20"/><rect x="1063.50" y="106.81" width="23.50" height="25.20"/><rect x="1063.50" y="140.95" width="23.50" height="25.20"/><rect x="1063.50" y="175.09" width="23.50" height="25.20"/><rect x="1063.50" y="209.22" width="23.50" height="25.20"/><rect x="1063.50" y="243.36" width="23.50" height="25.20"/><rect x="1063.50" y="277.50" width="23.50" height="25.20"/><rect x="1063.50" y="311.63" width="23.50" height="25.20"/><rect x="1063.50" y="345.77" width="23.50" height="25.20"/><rect x="1063.50" y="379.91" width="23.50" height="25.20"/><rect x="1063.50" y="414.04" width="23.50" height="25.20"/><rect x="1063.50" y="448.18" width="23.50" height="25.20"/><rect x="1063.50" y="482.32" width="23.50" height="25.20"/><rect x="1063.50" y="516.46" width="23.50" height="25.20"/><rect x="1063.50" y="550.59" width="23.50" height="25.20"/><rect x="1063.50" y="584.73" width="23.50" height="25.20"/><rect x="1063.50" y="618.87" width="23.50" height="25.20"/><rect x="1063.50" y="653.00" width="23.50" height="25.20"/><rect x="1063.50" y="687.14" width="23.50" height="25.20"/><rect x="1094.10" y="4.40" width="25.10" height="25.20"/><rect x="1094.10" y="38.54" width="25.10" height="25.20"/><rect x="1094.10" y="72.67" width="25.10" height="25.20"/><rect x="1094.10" y="106.81" width="25.10" height="25.20"/><rect x="1094.10" y="140.95" width="25.10" height="25.20"/><rect x="1094.10" y="175.09" width="25.10" height="25.20"/><rect x="1094.10" y="209.22" width="25.10" height="25.20"/><rect x="1094.10" y="243.36" width="25.10" height="25.20"/><rect x="1094.10" y="277.50" width="25.10" height="25.20"/><rect x="1094.10" y="311.63" width="25.10" height="25.20"/><rect x="1094.10" y="345.77" width="25.10" height="25.20"/><rect x="1094.10" y="379.91" width="25.10" height="25.20"/><rect x="1094.10" y="414.04" width="25.10" height="25.20"/><rect x="1094.10" y="448.18" width="25.10" height="25.20"/><rect x="1094.10" y="482.32" width="25.10" height="25.20"/><rect x="1094.10" y="516.46" width="25.10" height="25.20"/><rect x="1094.10" y="550.59" width="25.10" height="25.20"/><rect x="1094.10" y="584.73" width="25.10" height="25.20"/><rect x="1094.10" y="618.87" width="25.10" height="25.20"/><rect x="1094.10" y="653.00" width="25.10" height="25.20"/><rect x="1094.10" y="687.14" width="25.10" height="25.20"/><rect x="1127.90" y="4.40" width="25.00" height="25.20"/><rect x="1127.90" y="38.54" width="25.00" height="25.20"/><rect x="1127.90" y="72.67" width="25.00" height="25.20"/><rect x="1127.90" y="106.81" width="25.00" height="25.20"/><rect x="1127.90" y="140.95" width="25.00" height="25.20"/><rect x="1127.90" y="175.09" width="25.00" height="25.20"/><rect x="1127.90" y="209.22" width="25.00" height="25.20"/><rect x="1127.90" y="243.36" width="25.00" height="25.20"/><rect x="1127.90" y="277.50" width="25.00" height="25.20"/><rect x="1127.90" y="311.63" width="25.00" height="25.20"/><rect x="1127.90" y="345.77" width="25.00" height="25.20"/><rect x="1127.90" y="379.91" width="25.00" height="25.20"/><rect x="1127.90" y="414.04" width="25.00" height="25.20"/><rect x="1127.90" y="448.18" width="25.00" height="25.20"/><rect x="1127.90" y="482.32" width="25.00" height="25.20"/><rect x="1127.90" y="516.46" width="25.00" height="25.20"/><rect x="1127.90" y="550.59" width="25.00" height="25.20"/><rect x="1127.90" y="584.73" width="25.00" height="25.20"/><rect x="1127.90" y="618.87" width="25.00" height="25.20"/><rect x="1127.90" y="653.00" width="25.00" height="25.20"/><rect x="1127.90" y="687.14" width="25.00" height="25.20"/></g><rect x="307.50" y="409.54" width="170.50" height="69.04" fill="#ffffff"/><rect x="312.00" y="414.04" width="161.50" height="59.34" fill="#ff00ff"/><rect x="478.50" y="443.68" width="170.00" height="34.90" fill="#ffffff"/><rect x="483.00" y="448.18" width="161.00" height="25.20" fill="#ff00ff"/><rect x="649.00" y="307.13" width="33.50" height="171.45" fill="#ffffff"/><rect x="653.50" y="311.63" width="24.50" height="161.75" fill="#ff00ff"/><rect x="683.50" y="443.68" width="33.50" height="34.90" fill="#ffffff"/><rect x="688.00" y="448.18" width="24.50" height="25.20" fill="#00ff6a"/><rect x="473.50" y="443.68" width="9.50" height="34.90" fill="#ffffff"/><rect x="644.00" y="443.68" width="9.50" height="34.90" fill="#ffffff"/><rect x="678.00" y="443.68" width="10.00" height="34.90" fill="#ffffff"/><rect x="473.00" y="456.80" width="10.50" height="8.10" fill="#ff00ff"/><rect x="643.50" y="456.80" width="10.50" height="8.10" fill="#ff00ff"/><rect x="683.00" y="456.80" width="5.50" height="8.10" fill="#00ff6a"/><g transform="translate(393.00,461.20)"><path d="M-3.7,-5.2 L0,-2.4 L3.7,-5.2 L7.8,1.6 L3.7,5.1 L0,2.8 L-3.7,5.1 L-7.8,1.6 Z" fill="#ffff00" stroke="#ffff40" stroke-width="1.6" stroke-linejoin="round"/></g><rect x="444.30" y="307.63" width="204.40" height="34.00" fill="none" stroke="rgba(0,0,40,0.25)" stroke-width="4"/><rect x="444.30" y="307.63" width="204.40" height="34.00" fill="none" stroke="#3cd45c" stroke-width="2.2"/></svg>
<div class="a" style="left:216px;top:68px;width:48px;height:24px;background:rgba(0,0,0,0.72)"></div>
<div class="t" style="left:220.20px;top:71.90px;line-height:15px;font-size:15px;letter-spacing:-0.183px;color:#e6e6f0;font-weight:normal;">(4, -7)</div>
<div class="t" style="left:831.70px;top:345.50px;line-height:16px;font-size:16px;letter-spacing:-0.1px;color:#e6e6fa;font-weight:normal;text-shadow:0 0 1.5px rgba(0,0,30,0.95),0 0 3px rgba(0,0,30,0.7)">6 x 1</div>
<svg style="position:absolute;left:843.2px;top:400.8px" width="26" height="36" viewBox="0 0 26 36"><g transform="translate(4,4)"><polygon points="0,0 0,24.1 4.6,19.6 8.2,27.2 11.6,26.4 9.6,18.0 16.8,17.0" fill="#2a1a78" stroke="#2a1a78" stroke-width="2.2" stroke-linejoin="round"/><polygon points="0,0 0,24.1 4.6,19.6 8.2,27.2 11.6,26.4 9.6,18.0 16.8,17.0" fill="#ffffff"/></g></svg>
</body></html>
